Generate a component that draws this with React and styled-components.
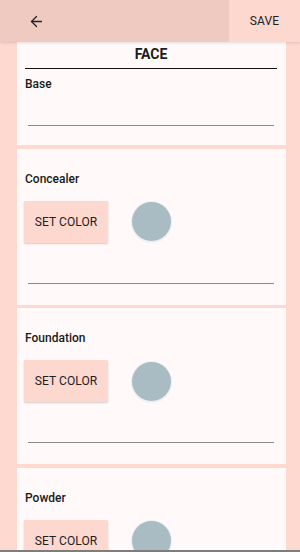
import React from "react";
import styled, { createGlobalStyle } from "styled-components";
import { ArrowLeft } from "lucide-react";

const GlobalStyle = createGlobalStyle`
  html, body {
    margin: 0;
    padding: 0;
    background: #fdd9d0;
    font-family: Roboto, "Liberation Sans", sans-serif;
    color: #1c1c1c;
  }
`;

const products = ["Concealer", "Foundation", "Powder"];

const App = () => {
  return (
    <Screen>
      <GlobalStyle />
      <Toolbar>
        <BackArea>
          <ArrowLeft size={17} strokeWidth={1.8} color="#222" />
        </BackArea>
        <SaveBtn>SAVE</SaveBtn>
      </Toolbar>
      <Content>
        <TitleCard>
          <Title>FACE</Title>
          <Label>Base</Label>
          <Field />
        </TitleCard>
        {products.map((p) => (
          <Card key={p}>
            <Label>{p}</Label>
            <ColorRow>
              <SetColor>SET COLOR</SetColor>
              <Swatch color="#a9bcc4" />
            </ColorRow>
            <Field spaced />
          </Card>
        ))}
      </Content>
      <BottomEdge />
    </Screen>
  );
};

export default App;

const Screen = styled.div`
  width: 300px;
  height: 552px;
  display: flex;
  flex-direction: column;
  overflow: hidden;
`;

const Toolbar = styled.div`
  position: relative;
  z-index: 2;
  height: 42px;
  flex-shrink: 0;
  display: flex;
  box-shadow: 0 1px 3px rgba(0, 0, 0, 0.12);
`;

const BackArea = styled.div`
  width: 229px;
  background: #efcac1;
  display: flex;
  align-items: center;
  padding-left: 28px;
  box-sizing: border-box;
`;

const SaveBtn = styled.div`
  flex: 1;
  background: #fdd8cf;
  display: flex;
  align-items: center;
  justify-content: center;
  font-size: 12px;
  letter-spacing: 0.2px;
  color: #222;
`;

const Content = styled.div`
  flex: 1;
  overflow: hidden;
  display: flex;
  flex-direction: column;
  gap: 3.5px;
  padding: 0 14px 0 17px;
`;

const CardBase = styled.div`
  background: #fffaf9;
  flex-shrink: 0;
  display: flex;
  flex-direction: column;
  padding: 0 9px 0 8px;
  box-sizing: border-box;
`;

const TitleCard = styled(CardBase)`
  height: 103px;
`;

const Card = styled(CardBase)`
  height: 156px;
  padding-top: 22px;
`;

const Title = styled.div`
  font-size: 14px;
  font-weight: 700;
  line-height: 18px;
  padding-top: 3px;
  padding-bottom: 5px;
  text-align: center;
  border-bottom: 1.5px solid #111;
  margin-bottom: 7px;
`;

const Label = styled.div`
  font-size: 12px;
  font-weight: 500;
  line-height: 16px;
  color: #1a1a1a;
`;

const ColorRow = styled.div`
  display: flex;
  align-items: center;
  gap: 24px;
  margin-top: 14px;
  margin-left: -1px;
`;

const SetColor = styled.div`
  width: 84px;
  height: 42px;
  background: #fdd8cf;
  display: flex;
  align-items: center;
  justify-content: center;
  font-size: 12px;
  color: #222;
  letter-spacing: 0.1px;
  box-shadow: 0 1px 2px rgba(0, 0, 0, 0.18);
  border-radius: 1px;
`;

const Swatch = styled.div`
  width: 39px;
  height: 39px;
  border-radius: 50%;
  background: ${(p) => p.color};
  box-shadow: 0 0 0 1px #eef0f1, 0 1px 2px rgba(0, 0, 0, 0.15);
`;

const Field = styled.div`
  height: 1px;
  background: #8a8a8a;
  margin: ${(p) => (p.spaced ? "40px 3px 0 3px" : "33px 3px 0 3px")};
`;

const BottomEdge = styled.div`
  height: 2px;
  flex-shrink: 0;
  background: #7d7d7d;
`;
